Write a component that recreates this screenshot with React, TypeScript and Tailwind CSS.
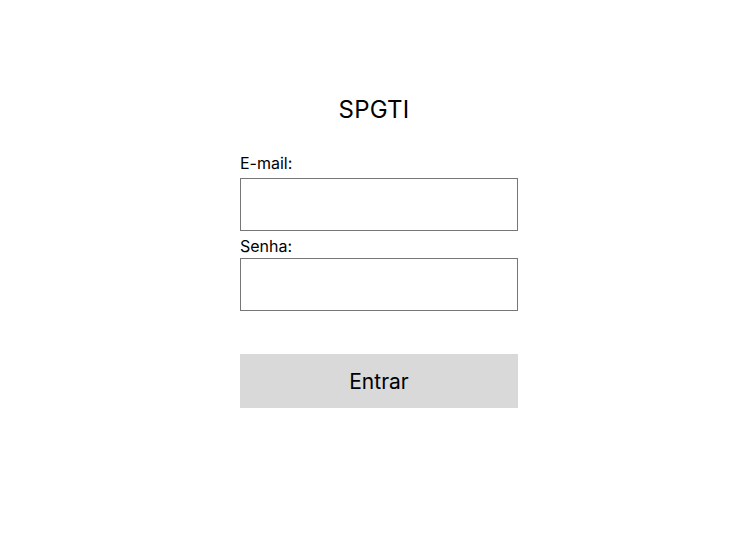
import React, { useState } from "react";

export default function App() {
  const [email, setEmail] = useState("");
  const [senha, setSenha] = useState("");

  return (
    <div className="min-h-[540px] w-full bg-white font-['Inter',sans-serif] text-black">
      <div className="flex flex-col items-center pt-[94px]">
        <h1 className="mr-[8px] text-[24px] leading-[32px] font-normal tracking-[0.2px]">SPGTI</h1>

        <form
          className="mt-[25px] ml-[2px] flex w-[278px] flex-col"
          onSubmit={(e) => e.preventDefault()}
        >
          <label className="text-[16px] leading-[24px]">E-mail:</label>
          <input
            type="email"
            value={email}
            onChange={(e) => setEmail(e.target.value)}
            className="mt-[3px] h-[53px] w-full border border-[#767676] bg-white px-2 outline-none"
          />

          <label className="mt-[3px] text-[16px] leading-[24px]">Senha:</label>
          <input
            type="password"
            value={senha}
            onChange={(e) => setSenha(e.target.value)}
            className="h-[53px] w-full border border-[#767676] bg-white px-2 outline-none"
          />

          <button
            type="submit"
            className="mt-[43px] h-[54px] w-full bg-[#d9d9d9] pt-[2px] text-[21px] leading-[28px]"
          >
            Entrar
          </button>
        </form>
      </div>
    </div>
  );
}
